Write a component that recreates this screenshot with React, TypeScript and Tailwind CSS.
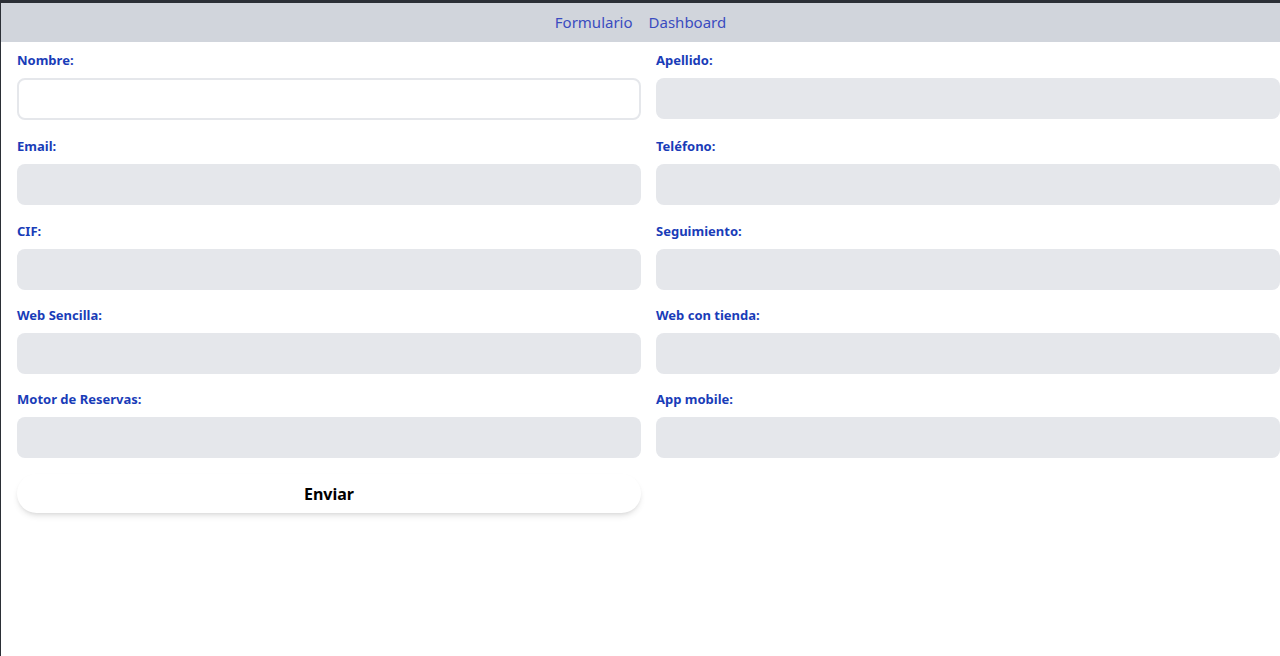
import React from "react";

const fields: [string, string][] = [
  ["Nombre:", "Apellido:"],
  ["Email:", "Teléfono:"],
  ["CIF:", "Seguimiento:"],
  ["Web Sencilla:", "Web con tienda:"],
  ["Motor de Reservas:", "App mobile:"],
];

export default function App() {
  const font = { fontFamily: '"Noto Sans", "Open Sans", sans-serif' };
  return (
    <div
      className="min-h-[656px] w-[1280px] overflow-hidden bg-white border-t-[3px] border-l border-[#2b2f36]"
      style={font}
    >
      <nav className="h-[39px] bg-gray-300 flex items-center justify-center gap-4 pb-[1px] text-[15px] text-[#3a4cc0]">
        <a>Formulario</a>
        <a>Dashboard</a>
      </nav>
      <form className="pl-4 pt-2 w-[1296px]">
        <div className="grid grid-cols-[624px_624px] gap-x-[15px]">
          {fields.map((row, i) => (
            <React.Fragment key={i}>
              {row.map((label, j) => (
                <div key={j} className={i === 0 ? "mb-[16px]" : i === 1 ? "mb-[16px]" : "mb-[15px]"}>
                  <label className="block text-[13px] font-bold text-blue-800 leading-5 mb-2">
                    {label}
                  </label>
                  {i === 0 && j === 0 ? (
                    <div className="h-[42px] rounded-lg border-2 border-gray-200 bg-white" />
                  ) : (
                    <div className="h-[41px] rounded-lg bg-gray-200" />
                  )}
                </div>
              ))}
            </React.Fragment>
          ))}
        </div>
        <button
          type="button"
          className="mt-[1px] w-[624px] h-[39px] rounded-[20px] bg-white shadow-md text-[16px] font-bold text-black"
        >
          Enviar
        </button>
      </form>
    </div>
  );
}
